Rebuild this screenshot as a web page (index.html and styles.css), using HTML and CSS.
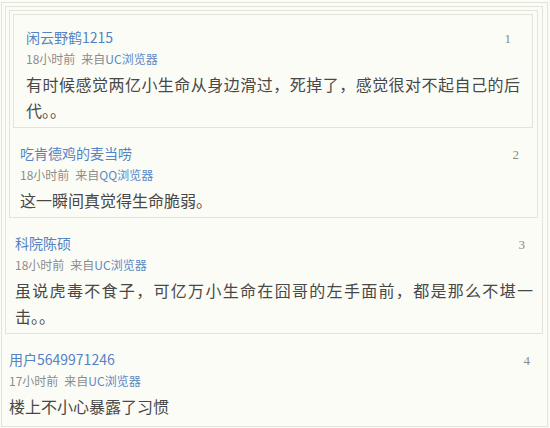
FILE: index.html
```html
<!DOCTYPE html>
<html lang="zh-CN">
<head>
<meta charset="utf-8">
<title>评论</title>
<link rel="stylesheet" href="styles.css">
</head>
<body>
<div class="floor lv4">
  <div class="floor lv3">
    <div class="floor lv2">
      <div class="floor lv1">
        <div class="head"><span class="user">闲云野鹤1215</span><span class="num">1</span></div>
        <div class="meta">18小时前<span class="from">来自</span><span class="src">UC浏览器</span></div>
        <div class="text">有时候感觉两亿小生命从身边滑过，死掉了，感觉很对不起自己的后代。。</div>
      </div>
      <div class="head"><span class="user">吃肯德鸡的麦当唠</span><span class="num">2</span></div>
      <div class="meta">18小时前<span class="from">来自</span><span class="src">QQ浏览器</span></div>
      <div class="text">这一瞬间真觉得生命脆弱。</div>
    </div>
    <div class="head"><span class="user">科院陈硕</span><span class="num">3</span></div>
    <div class="meta">18小时前<span class="from">来自</span><span class="src">UC浏览器</span></div>
    <div class="text">虽说虎毒不食子，可亿万小生命在囧哥的左手面前，都是那么不堪一击。。</div>
  </div>
  <div class="head"><span class="user">用户5649971246</span><span class="num">4</span></div>
  <div class="meta">17小时前<span class="from">来自</span><span class="src">UC浏览器</span></div>
  <div class="text">楼上不小心暴露了习惯</div>
</div>
</body>
</html>
```
FILE: styles.css
```css
html, body {
  margin: 0;
  padding: 0;
  background: #fcfcf7;
}
body {
  padding: 2px 2px 0 1px;
  font-family: "Noto Sans CJK SC", "Noto Sans", sans-serif;
  overflow: hidden;
  height: 428px;
  box-sizing: border-box;
}
.floor {
  border: 1px solid #e3e3d9;
  background: #fcfcf6;
  padding: 3px 4px 0 3px;
}
.floor > .floor {
  margin-bottom: 6px;
}
.head {
  display: flex;
  justify-content: space-between;
  align-items: flex-start;
  padding-top: 7px;
  height: 24px;
}
.user {
  font-size: 14px;
  line-height: 24px;
  color: #5283c4;
}
.num {
  font-family: "Liberation Serif", serif;
  font-size: 13px;
  line-height: 21px;
  padding-top: 3px;
  color: #8a8a8a;
}
.meta {
  font-size: 12px;
  line-height: 20px;
  color: #8c8c8c;
}
.from {
  margin-left: 6px;
}
.src {
  color: #5a88c6;
}
.text {
  margin-top: 2px;
  font-size: 16px;
  line-height: 26px;
  color: #484848;
  text-align: justify;
  padding-bottom: 4px;
}
.lv1 > .head, .lv1 > .meta, .lv1 > .text { padding-left: 9px; }
.lv1 > .head { padding-right: 17px; }
.lv1 > .text { padding-right: 8px; }
.lv2 > .head, .lv2 > .meta, .lv2 > .text { padding-left: 7px; }
.lv2 > .head { padding-right: 14px; }
.lv2 > .text { padding-right: 7px; }
.lv3 > .head, .lv3 > .meta, .lv3 > .text { padding-left: 6px; }
.lv3 > .head { padding-right: 13px; }
.lv3 > .text { padding-right: 5px; }
.lv4 > .head, .lv4 > .meta, .lv4 > .text { padding-left: 4px; }
.lv4 > .head { padding-right: 13px; }
.lv4 > .text { padding-right: 4px; padding-bottom: 7px; }
```
